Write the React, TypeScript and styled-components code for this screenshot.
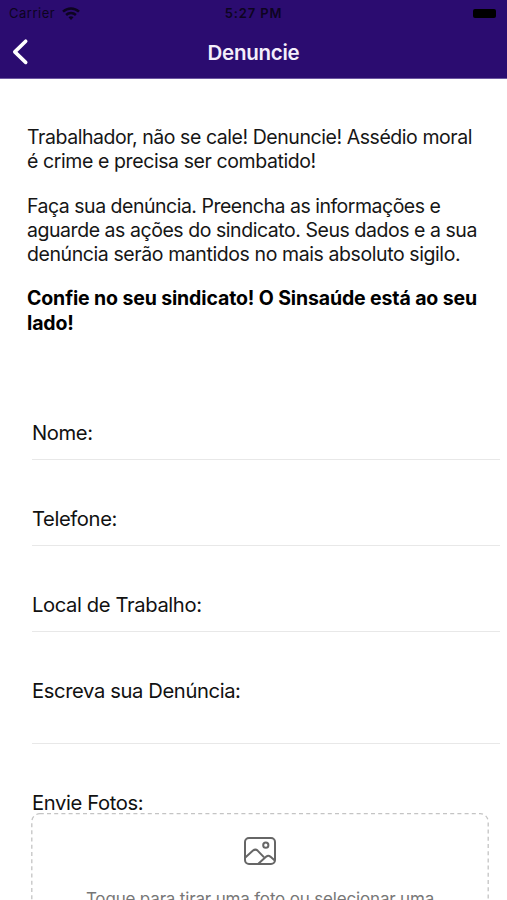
import React from "react";
import styled, { createGlobalStyle } from "styled-components";

const GlobalStyle = createGlobalStyle`
  *, *::before, *::after { box-sizing: border-box; }
  html, body { margin: 0; padding: 0; background: #fff; }
  body { font-family: Inter, "Liberation Sans", sans-serif; color: #111; }
`;

const Screen = styled.div`
  display: flex;
  flex-direction: column;
  height: 900px;
  overflow: hidden;
  background: #fff;
`;

const Header = styled.header`
  flex: none;
  height: 79px;
  background: #2b0c70;
  border-bottom: 1px solid #6d58a0;
`;

const StatusBar = styled.div`
  display: grid;
  grid-template-columns: 1fr auto 1fr;
  align-items: center;
  height: 27px;
  padding: 0 11px 0 9px;
  color: #0d0420;
`;

const Carrier = styled.div`
  display: flex;
  align-items: center;
  gap: 7px;
  font-size: 13px;
  line-height: 27px;
  letter-spacing: 0.5px;
`;

const Clock = styled.div`
  padding-left: 2px;
  font-size: 13px;
  font-weight: 600;
  line-height: 27px;
  letter-spacing: 0.85px;
`;

const Battery = styled.div`
  align-self: start;
  justify-self: end;
  width: 23px;
  height: 9px;
  margin-top: 9px;
  border-radius: 2px;
  background: #000;
`;

const NavBar = styled.div`
  display: grid;
  grid-template-columns: 40px 1fr 40px;
  height: 51px;
`;

const BackButton = styled.button`
  display: flex;
  align-items: flex-start;
  padding: 11px 0 0 11px;
  border: 0;
  background: none;
  color: #fff;
`;

const Title = styled.h1`
  margin: 0;
  text-align: center;
  color: #f4eefb;
  font-size: 20.5px;
  font-weight: 600;
  line-height: 52px;
  letter-spacing: -0.25px;
`;

const Intro = styled.section`
  flex: none;
  display: flex;
  flex-direction: column;
  gap: 19.7px;
  height: 334px;
  padding: 46px 0 0 27px;
`;

const Paragraph = styled.p<{ $strong?: boolean }>`
  margin: 0;
  font-size: 19.5px;
  line-height: 24.4px;
  font-weight: ${(p) => (p.$strong ? 700 : 400)};
  color: ${(p) => (p.$strong ? "#000" : "#161616")};
`;

const Line = styled.span<{ $tracking: number }>`
  display: block;
  white-space: nowrap;
  letter-spacing: ${(p) => p.$tracking}px;
`;

const Form = styled.form`
  flex: none;
  padding: 0 7px 0 32px;
`;

const Field = styled.label<{ $height: number }>`
  display: block;
  height: ${(p) => p.$height}px;
  border-bottom: 1px solid #e8e8e8;
`;

const Fields = styled.div`
  display: flex;
  flex-direction: column;
  gap: 47px;
  padding-top: 8px;
`;

const Label = styled.span`
  display: block;
  font-size: 20.2px;
  line-height: 24px;
  letter-spacing: -0.38px;
  white-space: nowrap;
`;

const PhotoField = styled.div`
  display: flex;
  flex-direction: column;
  padding-top: 47px;
`;

const Uploader = styled.div`
  position: relative;
  display: flex;
  flex-direction: column;
  align-items: center;
  width: 458px;
  height: 170px;
  margin: -2px 0 0 -1px;
  padding-top: 23px;
`;

const DashedOutline = styled.svg`
  position: absolute;
  inset: 0;
`;

const Hint = styled.span`
  margin-top: 22px;
  color: #777;
  font-size: 17px;
  line-height: 22px;
  letter-spacing: -0.17px;
  white-space: nowrap;
`;

function WifiIcon() {
  return (
    <svg width="18" height="14" viewBox="0 0 18 14" fill="none" stroke="currentColor" strokeWidth="2.5">
      <path d="M1 4.7C5.6.3 12.4.3 17 4.7" />
      <path d="M4.1 8c2.8-2.6 7-2.6 9.8 0" />
      <path d="M6.5 10.2c1.5-1.3 3.5-1.3 5 0L9 13z" fill="currentColor" stroke="none" />
    </svg>
  );
}

function BackIcon() {
  return (
    <svg width="18" height="28" viewBox="0 0 18 28" fill="none" stroke="currentColor" strokeWidth="3.6" strokeLinecap="round" strokeLinejoin="round">
      <path d="M14.7 3.2 3.8 13.9 14.7 24.4" />
    </svg>
  );
}

function ImageIcon() {
  return (
    <svg width="34" height="30" viewBox="0 0 34 30" fill="none" stroke="#666" strokeWidth="2" strokeLinejoin="round">
      <rect x="2" y="2" width="30" height="26" rx="4" />
      <circle cx="22.8" cy="9.2" r="2.6" />
      <path d="M2.3 21.5 10 14.6q2.4-2 4.6 0l6.5 6.8" />
      <path d="m15.3 27.7 8-7.1q2-1.6 4 0l4.5 3.9" />
    </svg>
  );
}

const intro: { strong?: boolean; lines: [string, number][] }[] = [
  {
    lines: [
      ["Trabalhador, não se cale! Denuncie! Assédio moral", -0.44],
      ["é crime e precisa ser combatido!", -0.41],
    ],
  },
  {
    lines: [
      ["Faça sua denúncia. Preencha as informações e", -0.49],
      ["aguarde as ações do sindicato. Seus dados e a sua", -0.45],
      ["denúncia serão mantidos no mais absoluto sigilo.", -0.41],
    ],
  },
  {
    strong: true,
    lines: [
      ["Confie no seu sindicato! O Sinsaúde está ao seu", -0.13],
      ["lado!", -0.15],
    ],
  },
];

const fields = [
  { label: "Nome:", height: 39 },
  { label: "Telefone:", height: 39 },
  { label: "Local de Trabalho:", height: 39 },
  { label: "Escreva sua Denúncia:", height: 65 },
];

export default function App() {
  return (
    <>
      <GlobalStyle />
      <Screen>
        <Header>
          <StatusBar>
            <Carrier>
              Carrier
              <WifiIcon />
            </Carrier>
            <Clock>5:27 PM</Clock>
            <Battery />
          </StatusBar>
          <NavBar>
            <BackButton type="button" aria-label="Voltar">
              <BackIcon />
            </BackButton>
            <Title>Denuncie</Title>
          </NavBar>
        </Header>
        <Intro>
          {intro.map((p, i) => (
            <Paragraph key={i} $strong={p.strong}>
              {p.lines.map(([text, tracking]) => (
                <Line key={text} $tracking={tracking}>{text}</Line>
              ))}
            </Paragraph>
          ))}
        </Intro>
        <Form>
          <Fields>
            {fields.map((f) => (
              <Field key={f.label} $height={f.height}>
                <Label>{f.label}</Label>
              </Field>
            ))}
          </Fields>
          <PhotoField>
            <Label>Envie Fotos:</Label>
            <Uploader>
              <DashedOutline width="458" height="170" fill="none" stroke="#c4c4c4" strokeWidth="1.3" strokeDasharray="4 3.2" aria-hidden>
                <rect x="0.8" y="0.7" width="456.4" height="168" rx="8" />
              </DashedOutline>
              <ImageIcon />
              <Hint>Toque para tirar uma foto ou selecionar uma</Hint>
            </Uploader>
          </PhotoField>
        </Form>
      </Screen>
    </>
  );
}
